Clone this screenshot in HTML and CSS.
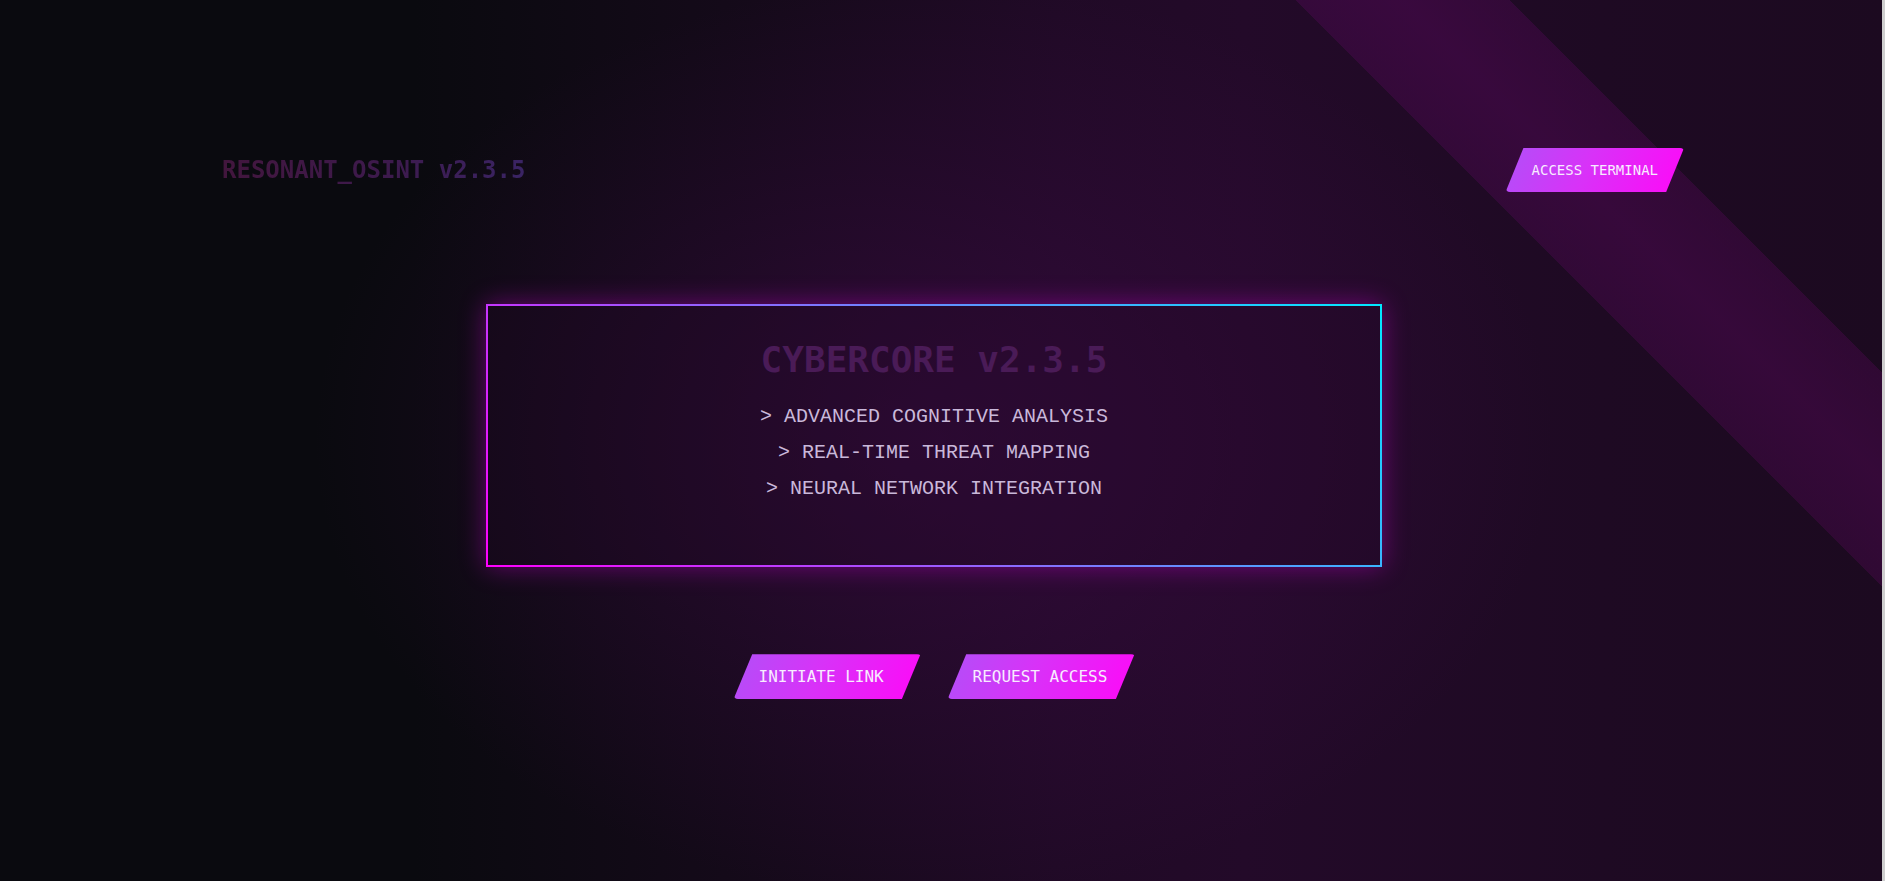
FILE: index.html
```html
<!DOCTYPE html>
<html lang="en">
<head>
<meta charset="utf-8">
<title>RESONANT_OSINT</title>
<link rel="stylesheet" href="styles.css">
</head>
<body>
<div class="edge"></div>
<div class="page">
  <header class="header">
    <div class="logo">RESONANT_OSINT v2.3.5</div>
    <a class="btn btn-small" href="#">ACCESS TERMINAL</a>
  </header>
  <main class="main">
    <section class="panel">
      <h1 class="panel-title">CYBERCORE v2.3.5</h1>
      <p class="panel-line">&gt; ADVANCED COGNITIVE ANALYSIS</p>
      <p class="panel-line">&gt; REAL-TIME THREAT MAPPING</p>
      <p class="panel-line">&gt; NEURAL NETWORK INTEGRATION</p>
    </section>
    <div class="actions">
      <a class="btn btn-large" href="#">INITIATE LINK</a>
      <a class="btn btn-large" href="#">REQUEST ACCESS</a>
    </div>
  </main>
</div>
</body>
</html>
```
FILE: styles.css
```css
* { box-sizing: border-box; }

html {
  margin: 0;
  padding: 0;
  height: 100%;
  overflow: hidden;
  background: #0a0a0f;
}

body {
  margin: 0;
  padding: 0;
  position: relative;
  height: 881px;
  overflow: hidden;
  font-family: "DejaVu Sans Mono", monospace;
  background:
    linear-gradient(45deg,
      rgba(255, 0, 255, 0) 78.67%,
      rgba(255, 0, 255, 0.085) 78.67%,
      rgba(255, 0, 255, 0.11) 82.5%,
      rgba(255, 0, 255, 0.085) 86.44%,
      rgba(255, 0, 255, 0) 86.44%),
    radial-gradient(ellipse 620px 460px at 934px 440px, rgba(70, 10, 80, 0.45), rgba(70, 10, 80, 0) 100%),
    linear-gradient(90deg, #0a0a0f 0%, #0a0a0f 22%, #150a1a 40%, #200a26 56%, #230a29 66%, #1e0a23 85%, #1c0a20 100%);
}

.edge {
  position: absolute;
  top: 0;
  right: 0;
  width: 3px;
  height: 100%;
  background: #cfcfcf;
  z-index: 5;
}

.page {
  position: relative;
  z-index: 1;
  margin-right: 17px;
}

.header {
  display: flex;
  justify-content: space-between;
  align-items: center;
  padding: 148px 184px 0 222px;
}

.logo {
  font-family: "DejaVu Sans Mono", monospace;
  font-weight: bold;
  font-size: 24px;
  background: linear-gradient(90deg, #42163d 0%, #3d1a4d 55%, #3a2464 100%);
  -webkit-background-clip: text;
  background-clip: text;
  color: transparent;
}

.btn {
  display: inline-block;
  font-family: "DejaVu Sans Mono", monospace;
  color: #f8ecff;
  text-decoration: none;
  white-space: nowrap;
  background: linear-gradient(115deg, #b150f8 0%, #d832f8 45%, #ff08f8 100%);
  border-radius: 4px;
  clip-path: polygon(10% 0, 100% 0, 90% 100%, 0 100%);
}

.btn-small {
  font-size: 14px;
  height: 44px;
  line-height: 44px;
  padding: 0 26px;
}

.main {
  display: flex;
  flex-direction: column;
  align-items: center;
}

.panel {
  margin-top: 112px;
  width: 896px;
  padding: 32px 0 58px;
  text-align: center;
  border: 2px solid transparent;
  border-image: linear-gradient(45deg, #ff00ff, #00eaff) 1;
  background: rgba(30, 8, 36, 0.25);
  box-shadow: 0 0 24px rgba(220, 0, 230, 0.4);
}

.panel-title {
  margin: 0 0 18px;
  font-family: "DejaVu Sans Mono", monospace;
  font-weight: bold;
  font-size: 36px;
  line-height: 1.2;
  color: #4a1b57;
}

.panel-line {
  margin: 0;
  font-family: "Liberation Mono", monospace;
  font-size: 20px;
  line-height: 36px;
  color: #c9b8da;
}

.actions {
  display: flex;
  gap: 27px;
  margin-top: 87px;
}

.btn-large {
  font-size: 16px;
  height: 45px;
  line-height: 45px;
  min-width: 187px;
  padding: 0 25px;
  text-align: left;
}
```
